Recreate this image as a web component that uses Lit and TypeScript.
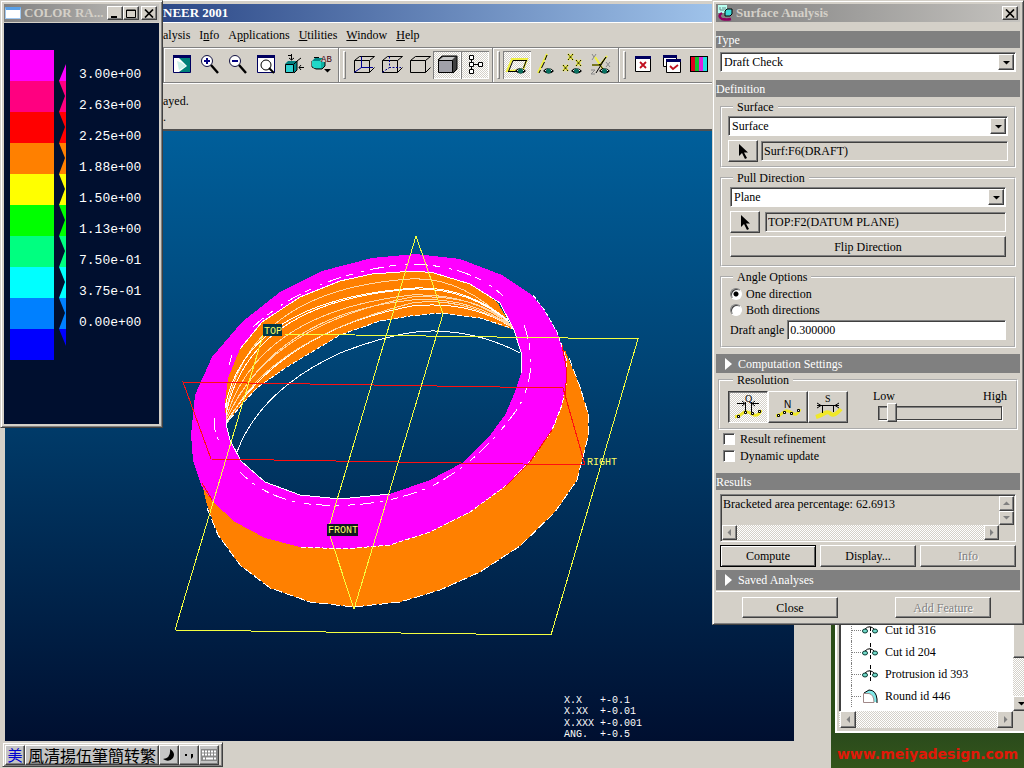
import { LitElement, html, svg, css } from "lit";
import { customElement, state } from "lit/decorators.js";

const shared = css`
  * { box-sizing: border-box; }
  :host { font: 12px/14px "Liberation Serif", "Times New Roman", serif; color: #000; }
  .frame {
    background: #d4d0c8;
    border: 1px solid;
    border-color: #d4d0c8 #404040 #404040 #d4d0c8;
    box-shadow: inset 1px 1px #fff, inset -1px -1px #808080;
    padding: 3px;
  }
  .raised {
    background: #d4d0c8;
    border: 1px solid;
    border-color: #fff #404040 #404040 #fff;
    box-shadow: inset -1px -1px #808080;
  }
  .sunken {
    border: 1px solid;
    border-color: #808080 #fff #fff #808080;
    box-shadow: inset 1px 1px #404040;
  }
  .dither {
    background: repeating-conic-gradient(#fff 0 25%, #d4d0c8 0 50%) 0 0 / 2px 2px;
  }
  button { font: inherit; color: inherit; padding: 0; margin: 0; border-radius: 0; }
  button:disabled { color: #808080; text-shadow: 1px 1px #fff; }
  svg { display: block; }
  .title {
    display: flex;
    align-items: center;
    height: 18px;
    padding: 0 2px 0 1px;
    gap: 3px;
    font-size: 13px;
    font-weight: bold;
    color: #d4d0c8;
    background: linear-gradient(90deg, #808080, #c4c2be);
    white-space: nowrap;
  }
  .title .name { flex: 1; min-width: 0; overflow: hidden; text-overflow: ellipsis; }
  .sys { width: 16px; height: 14px; flex: none; display: grid; place-items: center; }
`;

const closeGlyph = html`<svg width="10" height="9" viewBox="0 0 10 9" stroke="#000" stroke-width="1.7"><path d="M1 .5 9 8.5M9 .5 1 8.5" /></svg>`;
const arrow = (dir: string, color = "#000") => {
  const d: Record<string, string> = {
    down: "M1 3h7L4.500 6.500z",
    up: "M1 6h7L4.500 2.500z",
    left: "M6 1v7L2.500 4.500z",
    right: "M3 1v7l3.500-3.500z",
  };
  return html`<svg width="9" height="9" viewBox="0 0 9 9"><path d=${d[dir]} fill=${color} /></svg>`;
};

/* ---------- toolbar glyphs ---------- */
const eye = svg`<path d="M12 20q5-6 11 0q-5 5-11 0z" fill="#000"/><path d="M14 20q4-4 7 0" stroke="#fff" fill="none"/><circle cx="17.500" cy="20" r="2.500" fill="#087060"/>`;
const cubeBack = svg`<path d="M5.500 9.500l5-4h15M20.500 9.500l5-4M20.500 21.500l5-5" fill="none" stroke="#000"/>`;
const cubeFront = svg`<path d="M5.500 9.500h15v12h-15z" fill="none" stroke="#000"/>`;
const glyphs: Record<string, unknown> = {
  repaint: svg`<path d="M6.500 4.500h17v17h-17z" fill="#008078" stroke="#000060"/><path d="M6 4h18v3H6z" fill="#000060"/><path d="M7 7h5l8 8-8 6H7z" fill="#fff"/><path d="M10 10q5 1 9 5l-7 4z" fill="#c8f0e8"/>`,
  zoomIn: svg`<circle cx="12" cy="10" r="5.500" fill="#fff" stroke="#101040"/><path d="M9 10h6M12 7v6" stroke="#000080" stroke-width="2"/><path d="M16 14l7 8" stroke="#000" stroke-width="2.400"/>`,
  zoomOut: svg`<circle cx="12" cy="10" r="5.500" fill="#fff" stroke="#101040"/><path d="M9 10h6" stroke="#000080" stroke-width="2"/><path d="M16 14l7 8" stroke="#000" stroke-width="2.400"/>`,
  refit: svg`<path d="M6.500 5.500h17v16h-17z" fill="#fff" stroke="#000060"/><path d="M6 4h18v3H6z" fill="#000060"/><circle cx="15" cy="14" r="5" fill="#fff" stroke="#000"/><path d="M18 17l5 5" stroke="#000" stroke-width="2"/>`,
  orient: svg`<path d="M6 13l3-3h9v9l-3 3z" fill="#008080"/><path d="M6.500 13.500h8v8h-8z" fill="#30d0d0" stroke="#000"/><path d="M15 13l3-3v9l-3 3" fill="#088" stroke="#000"/><path d="M12.500 3v6M10 7l2.500 2L15 7M25 16.500h-5M22 14l-2 2.500 2 2.500M18 10l4-3M9 4.500h3" fill="none" stroke="#000"/>`,
  views: svg`<path d="M5 10l3-3h8l-3 3z" fill="#088"/><path d="M5 10v6l4 2h6l3-3v-4" fill="#10b0a0" stroke="#000"/><path d="M5 10h9v7H7l-2-2z" fill="#20d8c8"/><path d="M7 6.500h5" stroke="#000"/><path d="M17 18h7l-3.500 3.500z" fill="#000"/><text x="14" y="11" font-family="Liberation Mono, monospace" font-size="9" fill="#400010">AB</text>`,
  wire: svg`${cubeBack}${cubeFront}<path d="M12.500 5.500v11L5 21.500M12 16.500h12" fill="none" stroke="#000090"/>`,
  hidden: svg`${cubeBack}${cubeFront}<path d="M12.500 5.500v11L5 21.500M12 16.500h12" fill="none" stroke="#000090" stroke-dasharray="2 1.500"/>`,
  noHidden: svg`${cubeBack}${cubeFront}`,
  shade: svg`<path d="M5 9l4-4h15v13l-4 4z" fill="#404040" stroke="#000"/><path d="M6 9l4-3h12l-3 3z" fill="#c8c8c8"/><path d="M5.500 9.500h14v12h-14z" fill="#a0a0a8" stroke="#000"/>`,
  tree: svg`<path d="M10.500 6v15M12 13.500h8" stroke="#000"/><path d="M8.500 4.500h4v4h-4zM8.500 11.500h4v4h-4zM8.500 18.500h4v4h-4zM17.500 11.500h4v4h-4z" fill="#fff" stroke="#000"/>`,
  plane: svg`<path d="M4 20L9 8h15l-4 11z" fill="none" stroke="#f0f040" stroke-width="2"/><path d="M5.500 20.500l4.500-11h14M5 20.500h9M23.500 9l-3 8" fill="none" stroke="#000"/>${eye}`,
  axis: svg`<path d="M7 22L16 3" stroke="#f0f040" stroke-width="2"/><path d="M8 22l1.500-3M10.500 17l3-6M14 9l2-5" stroke="#000"/>${eye}`,
  points: svg`<path d="M9 3l5 6M14 3L9 9M4 14l5 6M9 14l-5 6M17 9l5 6M22 9l-5 6" stroke="#f0f040" stroke-width="2"/><path d="M9 3l5 6M14 3L9 9M4 14l5 6M9 14l-5 6M17 9l5 6M22 9l-5 6" stroke="#000" stroke-dasharray="2 1"/>${eye}`,
  csys: svg`<path d="M5 14h8l7-9M8 6l9 14" fill="none" stroke="#f0f040" stroke-width="2"/><path d="M5 14h8l6-8M9 22l10-16M12 13l4 5" fill="none" stroke="#000"/><path d="M5 3l2 3 2-3M7 6l-2 3M19 11l4 5M23 11l-4 5M4 19h4l-4 4h4" fill="none" stroke="#888"/>${eye}`,
  closeWin: svg`<path d="M6.500 6.500h15v14h-15z" fill="#fff" stroke="#000"/><path d="M6 5h16v3H6z" fill="#000060"/><path d="M11 11l6 6M17 11l-6 6" stroke="#c01020" stroke-width="1.800"/>`,
  activate: svg`<path d="M6.500 5.500h13v10h-13z" fill="#fff" stroke="#000"/><path d="M6 4h14v3H6z" fill="#000060"/><path d="M9.500 9.500h14v12h-14z" fill="#fff" stroke="#000"/><path d="M9 8h15v3H9z" fill="#000060"/><path d="M13 15l3 3 5-4" fill="none" stroke="#c01020" stroke-width="1.800"/>`,
  colors: svg`<path d="M5 5h18v16H5z" fill="#000"/><path d="M6 6h4v14H6z" fill="#e00020"/><path d="M10 6h4v14h-4z" fill="#10c030"/><path d="M14 6h4v14h-4z" fill="#e020e0"/><path d="M18 6h4v14h-4z" fill="#20e0e0"/>`,
};
const toolGroups: [string, string, boolean?][][] = [
  [["repaint", "Repaint"], ["zoomIn", "Zoom in"], ["zoomOut", "Zoom out"], ["refit", "Refit"], ["orient", "Orient"], ["views", "Saved views"]],
  [["wire", "Wireframe"], ["hidden", "Hidden line"], ["noHidden", "No hidden"], ["shade", "Shading", true], ["tree", "Model tree", true]],
  [["plane", "Datum planes", true], ["axis", "Datum axes"], ["points", "Datum points"], ["csys", "Coordinate systems"]],
  [["closeWin", "Close window"], ["activate", "Activate window"], ["colors", "Colors"]],
];

@customElement("pro-window")
export class ProWindow extends LitElement {
  static styles = [shared, css`
    :host { display: flex; flex-direction: column; background: #d4d0c8; padding-top: 3px; border-top: 1px solid #fff; }
    .caption {
      height: 18px; padding-left: 163px; font-size: 13px; line-height: 18px; font-weight: bold; color: #fff;
      background: linear-gradient(90deg, #0a246a, #a6caf0 90%);
    }
    nav { display: flex; gap: 9px; height: 25px; align-items: center; padding-left: 163px; border-top: 1px solid #fff; }
    nav a { color: #000; text-decoration: none; }
    .tools { display: flex; height: 36px; padding-left: 163px; border-top: 1px solid #808080; border-bottom: 1px solid #808080; box-shadow: inset 0 1px #fff; }
    .group { display: flex; align-items: center; padding: 0 3px; border-left: 1px solid #808080; box-shadow: inset 1px 0 #fff; }
    .grip { width: 3px; height: 28px; margin: 0 3px 0 1px; border: 1px solid; border-color: #fff #808080 #808080 #fff; }
    .tool { width: 28px; height: 28px; background: none; border: 0; }
    .tool.on {
      background: repeating-conic-gradient(#fff 0 25%, #d4d0c8 0 50%) 0 0 / 2px 2px;
      box-shadow: inset 1px 1px #808080, inset -1px -1px #fff;
    }
    .message { height: 48px; padding: 9px 0 0 163px; border-top: 1px solid #fff; border-bottom: 2px solid #505050; line-height: 16px; }
    .message p { margin: 0; }
    .view { flex: 1; min-height: 0; margin: 0 37px 27px 5px; background: linear-gradient(#005f9b, #004475 38%, #002a53 68%, #000f30); }
    .view svg { width: 100%; height: 100%; }
    .note { font: 10px/11px "Liberation Mono", monospace; }
  `];
  render() {
    const menus = [["", "", "alysis"], ["I", "n", "fo"], ["A", "p", "plications"], ["", "U", "tilities"], ["", "W", "indow"], ["", "H", "elp"]];
    return html`
      <div class="caption">NEER 2001</div>
      <nav>${menus.map(([a, b, c]) => html`<a href="#">${a}<u>${b}</u>${c}</a>`)}</nav>
      <div class="tools">
        ${toolGroups.map((g, i) => html`<div class="group">${i ? html`<span class="grip"></span>` : ""}
          ${g.map(([k, label, on]) => html`<button class="tool ${on ? "on" : ""}" aria-label=${label}>
            <svg width="28" height="28" viewBox="0 0 28 28">${glyphs[k]}</svg></button>`)}</div>`)}
      </div>
      <div class="message"><p>ayed.</p><p>.</p></div>
      <div class="view">${this.model()}</div>`;
  }
  private model() {
    const tolerances = [["X.X   +-0.1", 703], ["X.XX  +-0.01", 714], ["X.XXX +-0.001", 726], ["ANG.  +-0.5", 737]] as [string, number][];
    return html`<svg viewBox="5 131 789 610" fill="none" shape-rendering="crispEdges">
      <path fill="#ff8000" d="M201 480L207 505 218 535 240 565 270 588 310 602 354 607 400 602 440 590 480 572 520 546 555 512 577 480 588 437 588 413 580 387 565 350 545 370 535 415 500 455 440 500 340 525 260 515z"/>
      <path stroke="#fff" stroke-dasharray="9 3" d="M207 508L218 535 240 565 270 588 310 602 354 607 400 602 440 590 480 572 520 546 555 512 577 480 588 437 588 413 580 387 568 355"/>
      <path fill="#ff8000" d="M226 424L225 402 228 378 240 349 262 322 300 297 340 281 372 274 415 271 434 273 470 284 497 302 514 330 480 318 440 313 410 316 380 321 340 335 287 367 258 387 243 403z"/>
      <path fill="#ff00ff" fill-rule="evenodd" d="M191 435L195 395 212 357 242 322 280 292 322 271 372 258 415 254 460 259 502 275 532 295 545 311 557 332 566 358 567 380 562 405 552 430 533 458 507 485 470 512 430 532 390 545 345 549 300 547 265 538 235 522 213 502 201 485 193 460z
        M226 424L225 402 228 378 240 349 262 322 300 297 340 281 372 274 415 271 434 273 470 284 500 303 514 330 521 352 521 373 515 392 505 415 488 438 462 463 430 480 390 494 340 499 300 495 265 482 241 461 230 440z"/>
      <g stroke="#fff">
        <path d="M240 349L262 322 300 297 340 281 372 274 415 271 434 273 470 284 500 303 514 330 521 352 521 373M226 400V424L230 440 241 461 265 482 300 495 340 499 390 494"/>
        <path stroke-dasharray="5 2" d="M226 424L243 403 258 387 287 367 340 335 380 321 410 316 440 313 480 318 514 329M533 295L545 311 557 332 566 358 567 380 562 405 552 430 533 458 507 485 470 512 430 532 390 545 345 549 300 547"/>
        <path d="M237 452Q260 390 340 353Q400 330 435 331Q480 332 520 353"/>
        <path stroke="#ffd8a8" d="M226 412Q248 290 410 279Q462 276 508 323M226 418Q258 312 412 295Q472 293 510 325M226 420Q275 314 412 300Q470 296 512 327"/>
        <path d="M225 408Q245 300 415 288Q465 286 508 320M226 414Q250 300 415 289Q468 288 509 322M227 421Q285 330 412 306Q470 300 513 328"/>
        <path stroke="#ffd8a8" d="M227 418Q268 325 412 297Q480 294 512 326M228 422Q268 340 412 303Q462 296 512 327"/>
        <path stroke-dasharray="14 5 7 9 3 6" d="M253 327Q310 275 405 264Q470 264 503 296M214 418Q214 435 219 440M229 365L232 355M524 325Q540 370 518 408Q480 462 430 487Q370 512 300 503Q262 495 240 472"/>
      </g>
      <path stroke="#ff1010" d="M183 382L563 388 585 465 211 459zM202 483L212 500M562 345L567 372 565 395M552 430L530 462 505 487"/>
      <path stroke="#f4ff40" d="M284 334L638 339 551 635 175 630 263 335M416 236L443 314 354 609 328 530z"/>
      <rect x="263" y="324" width="19" height="12" fill="#003848"/>
      <rect x="327" y="524" width="31" height="12" fill="#101820"/>
      <g class="note" fill="#ffff60">
        <text x="264" y="334">TOP</text><text x="328" y="533">FRONT</text><text x="587" y="465">RIGHT</text>
      </g>
      <g class="note" fill="#fff">
        ${tolerances.map(([t, y]) => svg`<text x="564" y=${y}>${t.replace(/ /g, "\u00a0")}</text>`)}
      </g>
    </svg>`;
  }
}

@customElement("color-range")
export class ColorRange extends LitElement {
  static styles = [shared, css`
    :host { display: block; }
    .frame { height: 100%; display: flex; flex-direction: column; }
    .body { flex: 1; background: #000f2f; display: flex; margin-top: 1px; padding: 27px 0 0 6px; }
    .swatch { width: 44px; height: 31px; }
    .teeth { margin-left: 5px; }
    .labels { padding: 9px 0 0 13px; font: 13px/31px "Liberation Mono", monospace; color: #fff; }
    .boxes { display: flex; }
    .boxes button:last-child { margin-left: 2px; }
    .app { flex: none; width: 16px; height: 12px; background: #fff; border: 1px solid #a0c8f0; border-top: 3px solid #58a0e8; }
  `];
  render() {
    const colors = ["#ff00ff", "#ff0080", "#ff0000", "#ff8000", "#ffff00", "#00ff00", "#00ff80", "#00ffff", "#0080ff", "#0000ff"];
    const labels = ["3.00e+00", "2.63e+00", "2.25e+00", "1.88e+00", "1.50e+00", "1.13e+00", "7.50e-01", "3.75e-01", "0.00e+00"];
    const zig = "7,14 " + labels.map((_, i) => `0,${31 + i * 31} ${i < 8 ? `6,${46 + i * 31}` : ""}`).join(" ") + " 7,296";
    return html`<section class="frame">
      <div class="title"><span class="app"></span><span class="name">COLOR RA...</span>
        <span class="boxes">
          <button class="raised sys" aria-label="Minimize"><svg width="10" height="9"><path d="M1 7h6v2H1z"/></svg></button>
          <button class="raised sys" aria-label="Maximize"><svg width="10" height="9" fill="none" stroke="#000"><path d="M.5 1h9v7.500h-9zM0 1.500h10"/></svg></button>
          <button class="raised sys" aria-label="Close">${closeGlyph}</button>
        </span></div>
      <div class="body">
        <div>${colors.map((c) => html`<div class="swatch" style="background:${c}"></div>`)}</div>
        <svg class="teeth" width="7" height="310"><clipPath id="z"><polygon points=${zig}/></clipPath>
          <g clip-path="url(#z)">${colors.map((c, i) => svg`<rect y=${i * 31} width="7" height="31" fill=${c}/>`)}</g></svg>
        <div class="labels">${labels.map((l) => html`<div>${l}</div>`)}</div>
      </div></section>`;
  }
}

@customElement("surface-analysis")
export class SurfaceAnalysis extends LitElement {
  @state() private resolution = "Q";
  static styles = [shared, css`
    :host { display: block; }
    .bar { height: 17px; line-height: 16px; background: #808080; color: #fff; display: flex; align-items: center; }
    .fold { height: 19px; padding-left: 9px; gap: 6px; }
    .settings { margin-top: 6px; }
    .saved { height: 20px; }
    .gap { margin-top: 9px; }
    .block { margin: 4px 4px 8px; }
    .combo { position: relative; display: block; }
    select {
      appearance: none; width: 100%; height: 20px; display: block; margin: 0; padding: 0 20px 0 3px;
      background: #fff; font: inherit; border-radius: 0; color: #000;
    }
    .combo .drop { position: absolute; top: 2px; right: 2px; width: 16px; height: 16px; display: grid; place-items: center; pointer-events: none; }
    fieldset { min-width: 0; margin: 3px 4px 0; padding: 2px 6px 4px; border: 2px groove #fff; }
    legend { height: 14px; margin-left: 5px; padding: 0 4px; }
    .pull { padding: 2px 8px 8px; }
    .pull legend, .angle legend { margin-left: 3px; }
    .angle { padding: 2px 8px 6px; }
    .row { display: flex; align-items: center; gap: 3px; margin-top: 4px; }
    .pull .row { gap: 5px; }
    .pick { width: 30px; height: 22px; display: grid; place-items: center; flex: none; }
    .field { flex: 1; min-width: 0; height: 20px; padding: 0 2px; background: #d4d0c8; font: inherit; color: #000; border-radius: 0; margin: 0; }
    .edit { background: #fff; }
    .wide { width: 100%; height: 21px; margin-top: 3px; display: block; }
    .opt { display: flex; align-items: center; height: 16px; gap: 4px; }
    .opt input { appearance: none; width: 12px; height: 12px; margin: 0; background: #fff; border-radius: 50%; }
    .opt input[type="radio"]:checked { background: radial-gradient(circle at 50% 50%, #000 2px, #fff 3px); }
    .opt input[type="checkbox"] { border-radius: 0; }
    .check { height: 17px; padding-left: 7px; gap: 5px; }
    .angle .row { margin-top: 2px; gap: 3px; }
    .resolution { margin: 0 2px; padding: 4px 8px 5px; }
    .resolution .inner { display: flex; justify-content: space-between; }
    .modes { display: flex; }
    .mode { width: 40px; height: 32px; display: grid; place-items: center; }
    .mode[aria-pressed="true"] {
      background: repeating-conic-gradient(#fff 0 25%, #d4d0c8 0 50%) 0 0 / 2px 2px;
      border-color: #404040 #fff #fff #404040; box-shadow: inset 1px 1px #808080;
    }
    .slide { width: 135px; margin-top: -2px; }
    .ends { display: flex; justify-content: space-between; padding-right: 1px; }
    .slide input { appearance: none; display: block; width: 124px; height: 20px; margin: 0 0 0 5px; background: none; }
    .slide input::-webkit-slider-runnable-track { height: 14px; border: 1px solid #404040; box-shadow: inset 1px 1px #808080, 1px 1px #fff; }
    .slide input::-webkit-slider-thumb {
      appearance: none; width: 10px; height: 19px; margin-top: -4px; background: #d4d0c8;
      border: 1px solid; border-color: #fff #404040 #404040 #fff; box-shadow: inset -1px -1px #808080;
    }
    .results { margin-top: 9px; }
    .log { display: grid; grid-template: 1fr 15px / 1fr 15px; height: 48px; margin: 4px 4px 3px; padding: 1px; }
    .log output { padding: 1px; }
    .log .vbar { display: grid; grid-template-rows: 1fr 1fr; }
    .log .hbar { display: flex; justify-content: space-between; grid-column: 1; }
    .sb { width: 15px; display: grid; place-items: center; }
    .actions { display: grid; grid-template-columns: repeat(3, 1fr); gap: 4px; margin: 0 4px 3px; }
    .btn { height: 22px; }
    .default { border-color: #000; box-shadow: inset 1px 1px #fff, inset -1px -1px #606060; }
    .foot { display: flex; justify-content: space-between; border-top: 1px solid #fff; margin-top: 1px; padding: 5px 29px 3px 26px; }
    .foot button { width: 96px; height: 21px; }
  `];
  private combo(id: string, label: string, value: string) {
    return html`<span class="combo"><select id=${id} class="sunken" aria-label=${label}><option>${value}</option></select>
      <span class="raised drop">${arrow("down")}</span></span>`;
  }
  private pick() {
    return html`<button class="raised pick" aria-label="Select"><svg width="14" height="18" viewBox="0 0 14 18"><path d="M3 2v12l3-3 3 6 2-1-3-5.500h4z"/></svg></button>`;
  }
  render() {
    const white = html`<svg width="7" height="12"><path d="M0 0l7 6-7 6z" fill="#fff"/></svg>`;
    const modes: [string, unknown][] = [
      ["Q", svg`<path d="M4 24q5-1 8-4t9 1 9-4" stroke="#f0e828" stroke-width="3"/><path d="M6 10.500h7M21 10.500h7M14.500 9v10M20.500 9v10M11 8l3 2.500-3 2.500M24 8l-3 2.500 3 2.500" stroke="#000"/><path d="M6.500 22.500h2v2h-2zM13.500 18.500h2v2h-2zM20.500 19.500h2v2h-2zM27.500 17.500h2v2h-2z" fill="#fff" stroke="#000"/><text x="14" y="9" fill="#000">Q</text>`],
      ["N", svg`<path d="M5 23q5-1 8-4t8 1 8-4" stroke="#f0e828" stroke-width="3"/><path d="M6.500 21.500h2v2h-2zM12.500 18.500h2v2h-2zM19.500 19.500h2v2h-2zM26.500 16.500h2v2h-2z" fill="#fff" stroke="#000"/><text x="13" y="15" fill="#000" font-family="Liberation Sans, sans-serif">N</text>`],
      ["S", svg`<path d="M5 24q6-2 9-4t6 1 10-5" stroke="#f0e828" stroke-width="4"/><path d="M6 12.500h22M6 10l4 2.500-4 2.500M28 10l-4 2.500 4 2.500M11.500 12v8M22.500 12v7" stroke="#000"/><text x="14" y="9" fill="#000">S</text>`],
    ];
    return html`<section class="frame">
      <div class="title">
        <svg width="16" height="16"><path d="M1 0h9v8H1z" fill="#b8fff0"/><path d="M3 2v3h2M6 2v4M8 2v3" stroke="#688" fill="none"/><path d="M8 6l2-2h5v5l-2 2H8z" fill="#40d8d8" stroke="#000"/><path d="M5 8q-5 3 0 6q5 1 9 0" fill="none" stroke="#900060" stroke-width="2.500"/></svg>
        <span class="name">Surface Analysis</span>
        <button class="raised sys" aria-label="Close">${closeGlyph}</button></div>
      <label class="bar gap" for="type">Type</label>
      <div class="block">${this.combo("type", "Type", "Draft Check")}</div>
      <div class="bar">Definition</div>
      <fieldset><legend>Surface</legend>${this.combo("surface", "Surface", "Surface")}
        <div class="row">${this.pick()}<input class="field sunken" aria-label="Selected surface" readonly value="Surf:F6(DRAFT)"></div></fieldset>
      <fieldset class="pull"><legend>Pull Direction</legend>${this.combo("pull", "Pull direction", "Plane")}
        <div class="row">${this.pick()}<input class="field sunken" aria-label="Selected plane" readonly value="TOP:F2(DATUM PLANE)"></div>
        <button class="raised wide">Flip Direction</button></fieldset>
      <fieldset class="angle"><legend>Angle Options</legend>
        <label class="opt"><input class="sunken" type="radio" name="dir" checked>One direction</label>
        <label class="opt"><input class="sunken" type="radio" name="dir">Both directions</label>
        <div class="row"><label for="angle">Draft angle</label><input id="angle" class="field edit sunken" value="0.300000"></div></fieldset>
      <div class="bar fold settings">${white}Computation Settings</div>
      <fieldset class="resolution"><legend>Resolution</legend><div class="inner">
        <div class="modes">${modes.map(([k, g]) => html`<button class="raised mode" aria-label="Resolution ${k}" aria-pressed=${String(this.resolution === k)} @click=${() => (this.resolution = k)}>
          <svg width="34" height="28" viewBox="0 0 34 28" fill="none" font-size="10" font-family="Liberation Serif, serif">${g}</svg></button>`)}</div>
        <div class="slide"><div class="ends"><label for="res">Low</label><span>High</span></div><input id="res" type="range" min="0" max="100" value="7"></div>
      </div></fieldset>
      <label class="opt check"><input class="sunken" type="checkbox">Result refinement</label>
      <label class="opt check"><input class="sunken" type="checkbox">Dynamic update</label>
      <div class="bar results">Results</div>
      <div class="log sunken"><output>Bracketed area percentage: 62.6913</output>
        <span class="vbar"><span class="sb raised">${arrow("up", "#808080")}</span><span class="sb raised">${arrow("down", "#808080")}</span></span>
        <span class="hbar dither"><span class="sb raised">${arrow("left", "#808080")}</span><span class="sb raised">${arrow("right", "#808080")}</span></span></div>
      <div class="actions"><button class="btn raised default">Compute</button><button class="btn raised">Display...</button><button class="btn raised" disabled>Info</button></div>
      <div class="bar fold saved">${white}Saved Analyses</div>
      <div class="foot"><button class="raised">Close</button><button class="raised" disabled>Add Feature</button></div>
    </section>`;
  }
}

@customElement("model-tree")
export class ModelTree extends LitElement {
  static styles = [shared, css`
    :host { display: grid; grid-template: 1fr 17px / 1fr 17px; background: #d4d0c8; border: 1px solid #fff; border-width: 0 0 2px 2px; padding: 0 0 3px 2px; }
    ul { margin: 0; padding: 0 0 4px 10px; list-style: none; background: #fff; border-left: 2px solid #404040; display: flex; flex-direction: column; justify-content: flex-end; }
    li { display: flex; align-items: center; height: 22px; border-left: 1px dotted #808080; }
    .twig { width: 9px; border-top: 1px dotted #808080; }
    li svg { margin-right: 6px; }
    .v { display: flex; flex-direction: column; }
    .thumb { height: 40px; }
    .track { flex: 1; }
    .sb { width: 17px; height: 15px; display: grid; place-items: center; }
    .h { display: flex; justify-content: space-between; padding-left: 1px; }
    .h .sb { height: 17px; width: 16px; }
  `];
  render() {
    const cut = svg`<path d="M9.500 0v18" stroke="#000" stroke-dasharray="4 2"/><path d="M4 8q5-5 10 1" fill="none" stroke="#000"/><ellipse cx="4" cy="10" rx="2.500" ry="2" fill="#70d8c8" stroke="#063830"/><ellipse cx="14" cy="10" rx="2.500" ry="2" fill="#70d8c8" stroke="#063830"/>`;
    const round = svg`<path d="M3 6l5-3q7 0 8 9v3h-3z" fill="#80e8e8"/><path d="M3 6l5-3q7 0 8 9v4" fill="none" stroke="#000"/><path d="M2.500 15.500v-9H8q5 1 5 9z" fill="#fff" stroke="#a08888"/>`;
    const rows: [string, unknown][] = [["Cut id 316", cut], ["Cut id 204", cut], ["Protrusion id 393", cut], ["Round id 446", round]];
    return html`<ul>${rows.map(([t, g]) => html`<li><span class="twig"></span><svg width="18" height="18">${g}</svg>${t}</li>`)}</ul>
      <div class="v"><span class="raised thumb"></span><span class="dither track"></span><span class="raised sb">${arrow("down")}</span></div>
      <div class="h dither"><span class="raised sb">${arrow("left", "#808080")}</span><span class="raised sb">${arrow("right", "#808080")}</span></div>`;
  }
}

@customElement("app-root")
export class AppRoot extends LitElement {
  static styles = [shared, css`
    :host { display: block; position: relative; height: 100vh; overflow: hidden; background: #2b4d18; }
    .desk { position: absolute; right: 0; bottom: 0; width: 193px; height: 35px; display: grid; place-items: center;
      font: bold 14px/16px "DejaVu Sans", sans-serif; color: #e01808; background: linear-gradient(#2a4a1c, #34561a); padding-top: 6px; }
    pro-window { position: absolute; inset: 0 193px 0 0; }
    color-range { position: absolute; left: 0; top: 0; width: 163px; height: 428px; }
    model-tree { position: absolute; right: -6px; width: 195px; bottom: 35px; height: 115px; }
    surface-analysis { position: absolute; right: 0; top: 0; width: 312px; }
    .ime { position: absolute; left: 2px; bottom: 1px; display: flex; height: 25px; padding: 2px 3px 2px 2px;
      font-family: "Noto Sans CJK TC", sans-serif; }
    .ime button { height: 20px; width: 20px; display: grid; place-items: center; background: #c4c4c4; }
    .ime .lang { color: #0000d0; font-size: 15px; }
    .ime .mode { width: 134px; font-size: 16px; line-height: 18px; }
  `];
  render() {
    return html`
      <div class="desk">www.meiyadesign.com</div>
      <pro-window></pro-window>
      <model-tree></model-tree>
      <color-range></color-range>
      <surface-analysis></surface-analysis>
      <div class="ime frame">
        <button class="raised lang">美</button><button class="raised mode">風清揚伍筆簡转繁</button>
        <button class="raised" aria-label="Half width"><svg width="14" height="14"><path d="M8 1q6 4 3 9-4 5-10 1 8-1 7-10z"/></svg></button>
        <button class="raised" aria-label="Punctuation"><svg width="14" height="14"><path d="M3 6h2v2H3zM9 6h2v3l-2 2z"/></svg></button>
        <button class="raised" aria-label="Keyboard"><svg width="17" height="12"><path d="M0 0h17v12H0z" fill="#888"/><path d="M1 2.500h15M1 5.500h15" stroke="#fff" stroke-width="2" stroke-dasharray="2 1"/><path d="M2 9.500h2M5 9.500h7M13 9.500h2" stroke="#fff" stroke-width="2"/></svg></button>
      </div>`;
  }
}
